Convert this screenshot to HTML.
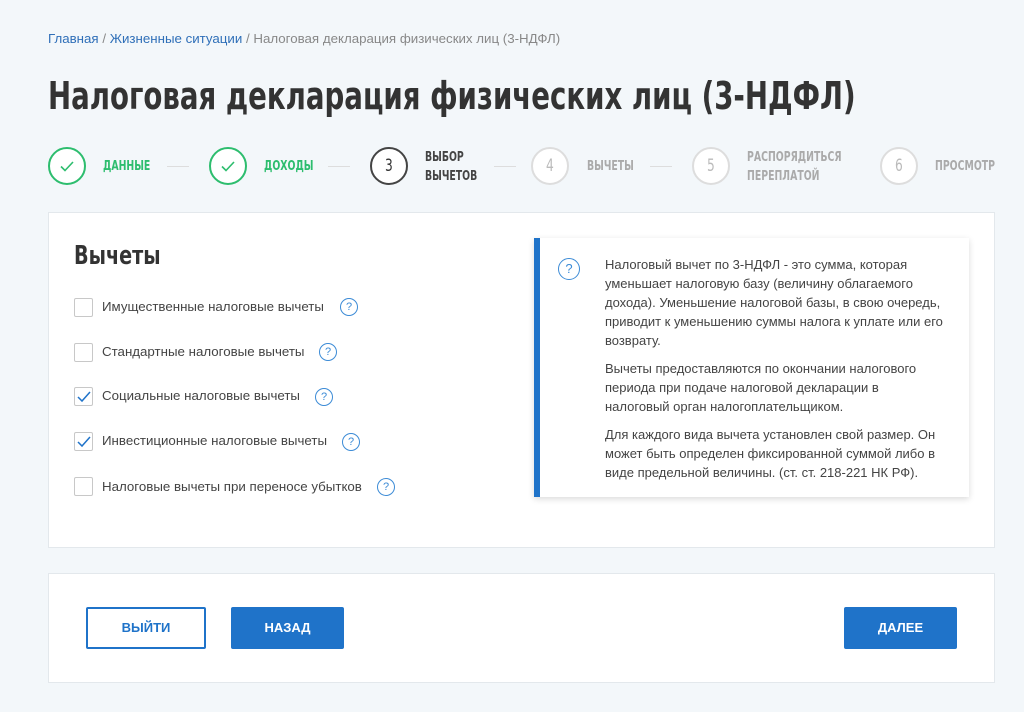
<!DOCTYPE html>
<html><head><meta charset="utf-8"><style>
body{margin:0;width:1024px;height:712px;background:#f3f7fa;font-family:"Liberation Sans",sans-serif;position:relative;overflow:hidden}
.a{position:absolute}
.bc{left:48px;top:31px;font-size:13.3px;color:#888}
.bc a{color:#2f6fb8;text-decoration:none}
h1{position:absolute;left:48px;top:74px;margin:0;font-family:"DejaVu Sans Condensed","DejaVu Sans",sans-serif;font-weight:bold;font-size:38px;color:#333;transform:scaleX(0.808);transform-origin:left;white-space:nowrap}
.c{position:absolute;width:38px;height:38px;border-radius:50%;border:2px solid #ddd;top:147px;box-sizing:border-box;font:17px "DejaVu Sans Condensed",sans-serif;color:#bbb;text-align:center;line-height:35px;background:#fff}
.c span{display:inline-block;transform:scaleX(0.8)}
.c.g{border-color:#2dbd6e}
.c.k{border-color:#444;color:#333}
.sl{position:absolute;font:bold 13px "DejaVu Sans Condensed",sans-serif;color:#aaa;line-height:19px;transform:scaleX(0.8);transform-origin:left;white-space:nowrap}
.ln{position:absolute;top:166px;width:22px;height:1px;background:#ddd}
.card{position:absolute;background:#fff;border:1px solid #e3e8ec;box-sizing:border-box}
.cb{position:absolute;left:74px;width:19px;height:19px;border:1px solid #c8c8c8;border-radius:2px;box-sizing:border-box}
.lb{position:absolute;left:102px;font-size:13.3px;color:#444}
.q{position:absolute;width:16px;height:16px;border:1px solid #3c8bd6;border-radius:50%;color:#3c8bd6;font-size:11px;text-align:center;line-height:16px}
.btn{position:absolute;top:607px;height:42px;box-sizing:border-box;font:bold 13px "Liberation Sans",sans-serif;text-align:center;line-height:40px;color:#fff;background:#1f73c9;border:1px solid #1f73c9;border-radius:2px}
</style></head><body>
<div class="a bc"><a>Главная</a> / <a>Жизненные ситуации</a> / Налоговая декларация физических лиц (3-НДФЛ)</div>
<h1>Налоговая декларация физических лиц (3-НДФЛ)</h1>

<div class="c g" style="left:48px"><svg width="34" height="34" viewBox="0 0 34 34"><path d="M11 17.5l4 4 8-8.5" fill="none" stroke="#2dbd6e" stroke-width="1.6"/></svg></div>
<div class="sl" style="left:103px;top:157px;color:#2dbd6e">ДАННЫЕ</div>
<div class="ln" style="left:167px"></div>
<div class="c g" style="left:209px"><svg width="34" height="34" viewBox="0 0 34 34"><path d="M11 17.5l4 4 8-8.5" fill="none" stroke="#2dbd6e" stroke-width="1.6"/></svg></div>
<div class="sl" style="left:264px;top:157px;color:#2dbd6e">ДОХОДЫ</div>
<div class="ln" style="left:328px"></div>
<div class="c k" style="left:370px"><span>3</span></div>
<div class="sl" style="left:425px;top:148px;color:#444">ВЫБОР<br>ВЫЧЕТОВ</div>
<div class="ln" style="left:494px"></div>
<div class="c" style="left:531px"><span>4</span></div>
<div class="sl" style="left:587px;top:157px">ВЫЧЕТЫ</div>
<div class="ln" style="left:650px"></div>
<div class="c" style="left:692px"><span>5</span></div>
<div class="sl" style="left:747px;top:148px">РАСПОРЯДИТЬСЯ<br>ПЕРЕПЛАТОЙ</div>
<div class="c" style="left:880px"><span>6</span></div>
<div class="sl" style="left:935px;top:157px">ПРОСМОТР</div>

<div class="card" style="left:48px;top:212px;width:947px;height:336px"></div>
<div class="a" style="left:74px;top:241px;font:bold 26px 'DejaVu Sans Condensed',sans-serif;color:#333;transform:scaleX(0.82);transform-origin:left">Вычеты</div>

<div class="cb" style="top:298px"></div><div class="lb" style="top:299px">Имущественные налоговые вычеты</div><div class="q" style="left:340px;top:298px">?</div>
<div class="cb" style="top:343px"></div><div class="lb" style="top:344px">Стандартные налоговые вычеты</div><div class="q" style="left:319px;top:343px">?</div>
<div class="cb" style="top:387px"><svg width="17" height="17"><path d="M3 9l4 4 8-9" fill="none" stroke="#1f73c9" stroke-width="1.5"/></svg></div><div class="lb" style="top:388px">Социальные налоговые вычеты</div><div class="q" style="left:315px;top:388px">?</div>
<div class="cb" style="top:432px"><svg width="17" height="17"><path d="M3 9l4 4 8-9" fill="none" stroke="#1f73c9" stroke-width="1.5"/></svg></div><div class="lb" style="top:433px">Инвестиционные налоговые вычеты</div><div class="q" style="left:342px;top:433px">?</div>
<div class="cb" style="top:477px"></div><div class="lb" style="top:479px">Налоговые вычеты при переносе убытков</div><div class="q" style="left:377px;top:478px">?</div>

<div class="a" style="left:534px;top:238px;width:435px;height:259px;background:#fff;border-left:6px solid #1f73c9;box-shadow:0 2px 6px rgba(0,0,0,0.15);box-sizing:border-box"></div>
<div class="q" style="left:558px;top:258px;width:20px;height:20px;line-height:20px;font-size:13px">?</div>
<div class="a" style="left:605px;top:255px;width:345px;font-size:13px;line-height:19px;color:#444">
<p style="margin:0 0 9px">Налоговый вычет по 3-НДФЛ - это сумма, которая уменьшает налоговую базу (величину облагаемого дохода). Уменьшение налоговой базы, в свою очередь, приводит к уменьшению суммы налога к уплате или его возврату.</p>
<p style="margin:0 0 9px">Вычеты предоставляются по окончании налогового периода при подаче налоговой декларации в<br>налоговый орган налогоплательщиком.</p>
<p style="margin:0">Для каждого вида вычета установлен свой размер. Он может быть определен фиксированной суммой либо в виде предельной величины. (ст. ст. 218-221 НК РФ).</p>
</div>

<div class="card" style="left:48px;top:573px;width:947px;height:110px"></div>
<div class="btn" style="left:86px;width:120px;background:#fff;color:#1f73c9;border:2px solid #1f73c9;line-height:38px">ВЫЙТИ</div>
<div class="btn" style="left:231px;width:113px">НАЗАД</div>
<div class="btn" style="left:844px;width:113px">ДАЛЕЕ</div>
</body></html>
